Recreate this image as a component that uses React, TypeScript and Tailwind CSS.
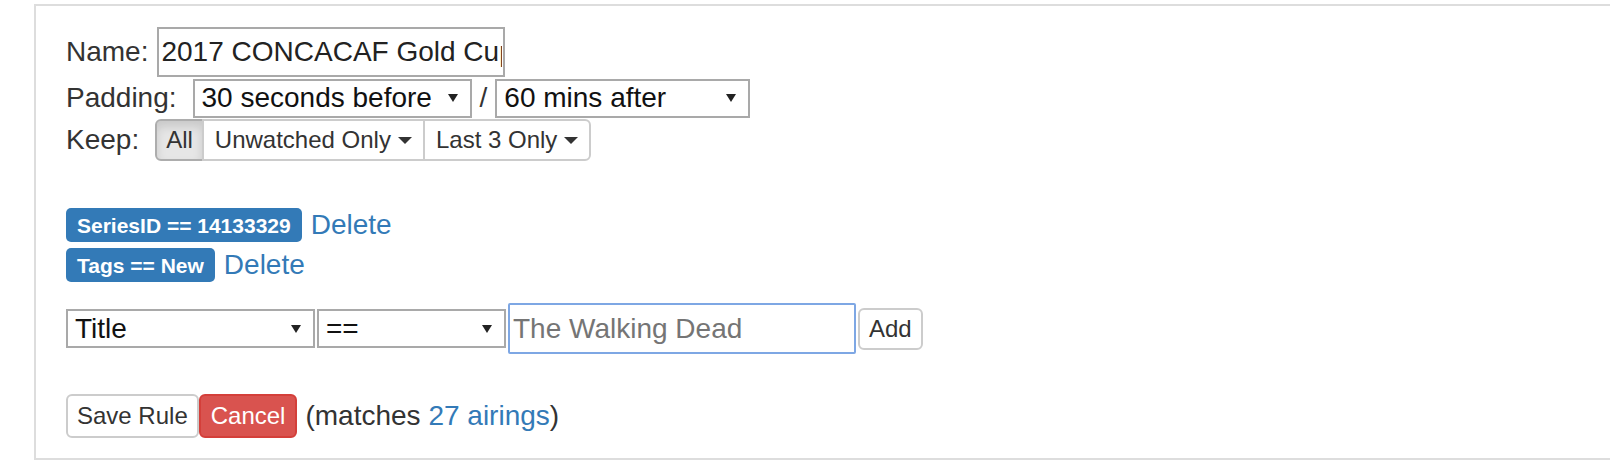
import React from 'react';

function Arrow() {
  return (
    <svg width="10" height="8" viewBox="0 0 10 8" className="shrink-0">
      <path d="M0 0h10L5 8z" fill="#222" />
    </svg>
  );
}

function Caret() {
  return (
    <svg width="14" height="7" viewBox="0 0 14 7" className="ml-[7px] shrink-0">
      <path d="M0 0h14L7 7z" fill="#333" />
    </svg>
  );
}

function FakeSelect({ value, width }: { value: string; width: string }) {
  return (
    <div className={`${width} h-[39px] border-2 border-[#a9a9a9] bg-white flex items-center justify-between pl-[7px] pr-[12px] text-[28px] text-[#111]`}>
      <span className="whitespace-nowrap">{value}</span>
      <Arrow />
    </div>
  );
}

export default function App() {
  return (
    <div className="w-[1610px] h-[460px] overflow-hidden bg-white font-['Liberation_Sans',Arial,sans-serif] text-[#333] text-[28px] leading-[32px]">
      <div className="ml-[34px] mt-[4px] h-[456px] border-l-2 border-t-2 border-b-2 border-[#ddd] pl-[30px]">
        {/* name */}
        <div className="mt-[21px] h-[50px] flex items-center">
          <span>Name:</span>
          <input
            defaultValue="2017 CONCACAF Gold Cup"
            className="ml-[9px] w-[348px] h-[50px] border-2 border-[#a9a9a9] pl-[2px] pr-[1px] text-[28px] text-[#222] outline-none"
          />
        </div>

        {/* padding */}
        <div className="mt-[2px] h-[38px] flex items-center">
          <span>Padding:</span>
          <div className="ml-[16px]">
            <FakeSelect value="30 seconds before" width="w-[279px]" />
          </div>
          <span className="mx-[8px]">/</span>
          <FakeSelect value="60 mins after" width="w-[255px]" />
        </div>

        {/* keep */}
        <div className="mt-[2px] h-[42px] flex items-center">
          <span>Keep:</span>
          <div className="ml-[16px] flex h-[42px] text-[24px]">
            <button className="h-full px-[9px] border-2 border-[#adadad] bg-[#e6e6e6] rounded-l-[6px] shadow-[inset_0_6px_10px_rgba(0,0,0,0.125)] text-[#333]">
              All
            </button>
            <button className="-ml-[2px] h-full px-[11px] border-2 border-[#ccc] bg-white flex items-center text-[#333]">
              Unwatched Only
              <Caret />
            </button>
            <button className="-ml-[2px] h-full px-[11px] border-2 border-[#ccc] bg-white rounded-r-[6px] flex items-center text-[#333]">
              Last 3 Only
              <Caret />
            </button>
          </div>
        </div>

        {/* rules */}
        <div className="mt-[47px] h-[34px] flex items-center">
          <span className="h-[34px] px-[11px] flex items-center rounded-[5px] bg-[#337ab7] text-white font-bold text-[21px] leading-none whitespace-nowrap">
            SeriesID == 14133329
          </span>
          <a className="ml-[9px] text-[#337ab7] cursor-pointer">Delete</a>
        </div>
        <div className="mt-[6px] h-[34px] flex items-center">
          <span className="h-[34px] px-[11px] flex items-center rounded-[5px] bg-[#337ab7] text-white font-bold text-[21px] leading-none whitespace-nowrap">
            Tags == New
          </span>
          <a className="ml-[9px] text-[#337ab7] cursor-pointer">Delete</a>
        </div>

        {/* new rule */}
        <div className="mt-[21px] h-[51px] flex items-center gap-[2px]">
          <FakeSelect value="Title" width="w-[249px]" />
          <FakeSelect value="==" width="w-[189px]" />
          <input
            placeholder="The Walking Dead"
            className="w-[348px] h-[51px] border-2 border-[#7ea7e4] rounded-[2px] pl-[3px] text-[28px] text-[#222] placeholder:text-[#757575] outline-none"
          />
          <button className="h-[42px] px-[9px] border-2 border-[#ccc] bg-white rounded-[6px] text-[24px] text-[#333]">
            Add
          </button>
        </div>

        {/* actions */}
        <div className="mt-[40px] h-[44px] flex items-center">
          <button className="h-[44px] px-[9px] border-2 border-[#ccc] bg-white rounded-[6px] text-[24px] text-[#333]">
            Save Rule
          </button>
          <button className="h-[44px] px-[10px] border-2 border-[#d43f3a] bg-[#d9534f] rounded-[6px] text-[24px] text-white">
            Cancel
          </button>
          <span className="ml-[8px] whitespace-nowrap">
            (matches <a className="text-[#337ab7] cursor-pointer">27 airings</a>)
          </span>
        </div>
      </div>
    </div>
  );
}
